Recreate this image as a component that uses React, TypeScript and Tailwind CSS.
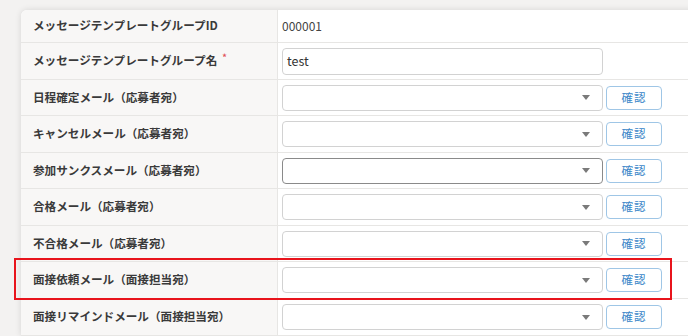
const font = { fontFamily: '"Noto Sans CJK JP", "Noto Sans", sans-serif' };

type Row = {
  label: string;
  h: string;
  kind: "id" | "input" | "select";
  required?: boolean;
  active?: boolean;
};

const rows: Row[] = [
  { label: "メッセージテンプレートグループID", h: "h-[33px]", kind: "id" },
  { label: "メッセージテンプレートグループ名", h: "h-[37px]", kind: "input", required: true },
  { label: "日程確定メール（応募者宛）", h: "h-[36px]", kind: "select" },
  { label: "キャンセルメール（応募者宛）", h: "h-[37px]", kind: "select" },
  { label: "参加サンクスメール（応募者宛）", h: "h-[36px]", kind: "select", active: true },
  { label: "合格メール（応募者宛）", h: "h-[37px]", kind: "select" },
  { label: "不合格メール（応募者宛）", h: "h-[36px]", kind: "select" },
  { label: "面接依頼メール（面接担当宛）", h: "h-[37px]", kind: "select" },
  { label: "面接リマインドメール（面接担当宛）", h: "h-[37px]", kind: "select" },
];

function SelectBox({ active }: { active?: boolean }) {
  return (
    <div className="flex items-center gap-[3px]">
      <div
        className={`flex h-[26px] w-[321px] items-center justify-end rounded-[4px] border bg-white pr-[12px] ${
          active ? "border-[#8a8a8a]" : "border-[#d2d2d2]"
        }`}
      >
        <span className="h-0 w-0 border-x-[4px] border-t-[5px] border-x-transparent border-t-[#7a7a7a]" />
      </div>
      <button className="flex h-[24px] w-[56px] items-center justify-center rounded-[4px] border border-[#9fc6e6] bg-white text-[11.5px] tracking-[1px] text-[#3a86c8]">
        確認
      </button>
    </div>
  );
}

export default function App() {
  return (
    <div className="relative h-[336px] w-[688px] overflow-hidden bg-[#f3f2f1] pl-[21px] pt-[10px]" style={font}>
      <div className="w-[700px] overflow-hidden rounded-tl-[6px] bg-white shadow-[0_0_6px_rgba(0,0,0,0.12)]">
        {rows.map((r) => (
          <div key={r.label} className={`flex ${r.h} border-b border-[#e7e6e4]`}>
            <div className="flex w-[257px] shrink-0 items-center border-r border-[#e7e6e4] bg-[#f8f7f6] pl-[12px] text-[11.6px] font-bold text-[#3a3a3a]">
              {r.label}
              {r.required && <span className="ml-[5px] -mt-[6px] text-[9px] text-[#e0525a]">*</span>}
            </div>
            <div className="flex flex-1 items-center pl-[4px]">
              {r.kind === "id" && <span className="text-[12px] text-[#444]">000001</span>}
              {r.kind === "input" && (
                <div className="flex h-[27px] w-[321px] items-center rounded-[4px] border border-[#d2d2d2] bg-white pl-[4px] text-[12.5px] text-[#333]">
                  test
                </div>
              )}
              {r.kind === "select" && <SelectBox active={r.active} />}
            </div>
          </div>
        ))}
      </div>
      <div className="absolute left-[14px] top-[258px] h-[42px] w-[658px] border-2 border-[#e8141c]" />
    </div>
  );
}
